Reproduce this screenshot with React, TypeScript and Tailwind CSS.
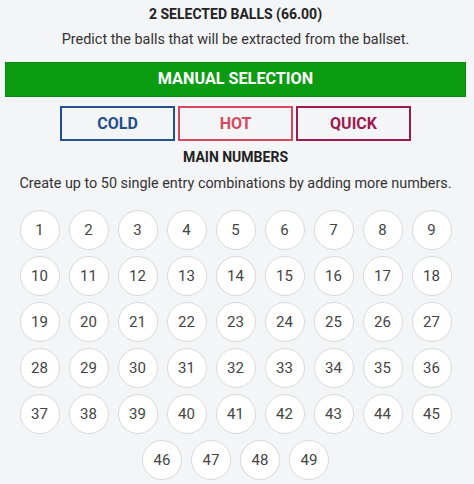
import React from "react";

const rows = [
  [1, 2, 3, 4, 5, 6, 7, 8, 9],
  [10, 11, 12, 13, 14, 15, 16, 17, 18],
  [19, 20, 21, 22, 23, 24, 25, 26, 27],
  [28, 29, 30, 31, 32, 33, 34, 35, 36],
  [37, 38, 39, 40, 41, 42, 43, 44, 45],
  [46, 47, 48, 49],
];

export default function App() {
  return (
    <div className="w-[474px] h-[484px] bg-[#f4f5f7] overflow-hidden">
      <div
        className="w-[471px] flex flex-col items-center pt-[4px] text-[#2a2a2a]"
        style={{ fontFamily: "Roboto, 'Noto Sans', sans-serif" }}
      >
        <div className="text-[14px] leading-[20px] font-bold text-[#222]">2 SELECTED BALLS (66.00)</div>
        <div className="mt-[5px] text-[14.4px] leading-[22px] text-[#333]">
          Predict the balls that will be extracted from the ballset.
        </div>
        <div className="mt-[11px] w-[461px] h-[35px] bg-[#0b9c12] border border-[#0a8a10] flex items-center justify-center text-white font-bold text-[16.2px]">
          MANUAL SELECTION
        </div>
        <div className="mt-[9px] flex gap-[3px]">
          <div className="w-[115px] h-[35px] border-2 border-[#24508c] flex items-center justify-center font-bold text-[16px] text-[#24508c]">
            COLD
          </div>
          <div className="w-[115px] h-[35px] border-2 border-[#d44a5c] flex items-center justify-center font-bold text-[16px] text-[#d44a5c]">
            HOT
          </div>
          <div className="w-[115px] h-[35px] border-2 border-[#9e1a50] flex items-center justify-center font-bold text-[16px] text-[#9e1a50]">
            QUICK
          </div>
        </div>
        <div className="mt-[6px] text-[14px] leading-[20px] font-bold text-[#222]">MAIN NUMBERS</div>
        <div className="mt-[6px] text-[14.4px] leading-[22px] text-[#333]">
          Create up to 50 single entry combinations by adding more numbers.
        </div>
        <div className="mt-[15px] flex flex-col gap-[6px] items-center">
          {rows.map((r, i) => (
            <div key={i} className="flex gap-[9px]">
              {r.map((n) => (
                <div
                  key={n}
                  className="w-[40px] h-[40px] rounded-full bg-white border border-[#dadada] flex items-center justify-center text-[15px] text-[#444]"
                >
                  {n}
                </div>
              ))}
            </div>
          ))}
        </div>
      </div>
    </div>
  );
}
